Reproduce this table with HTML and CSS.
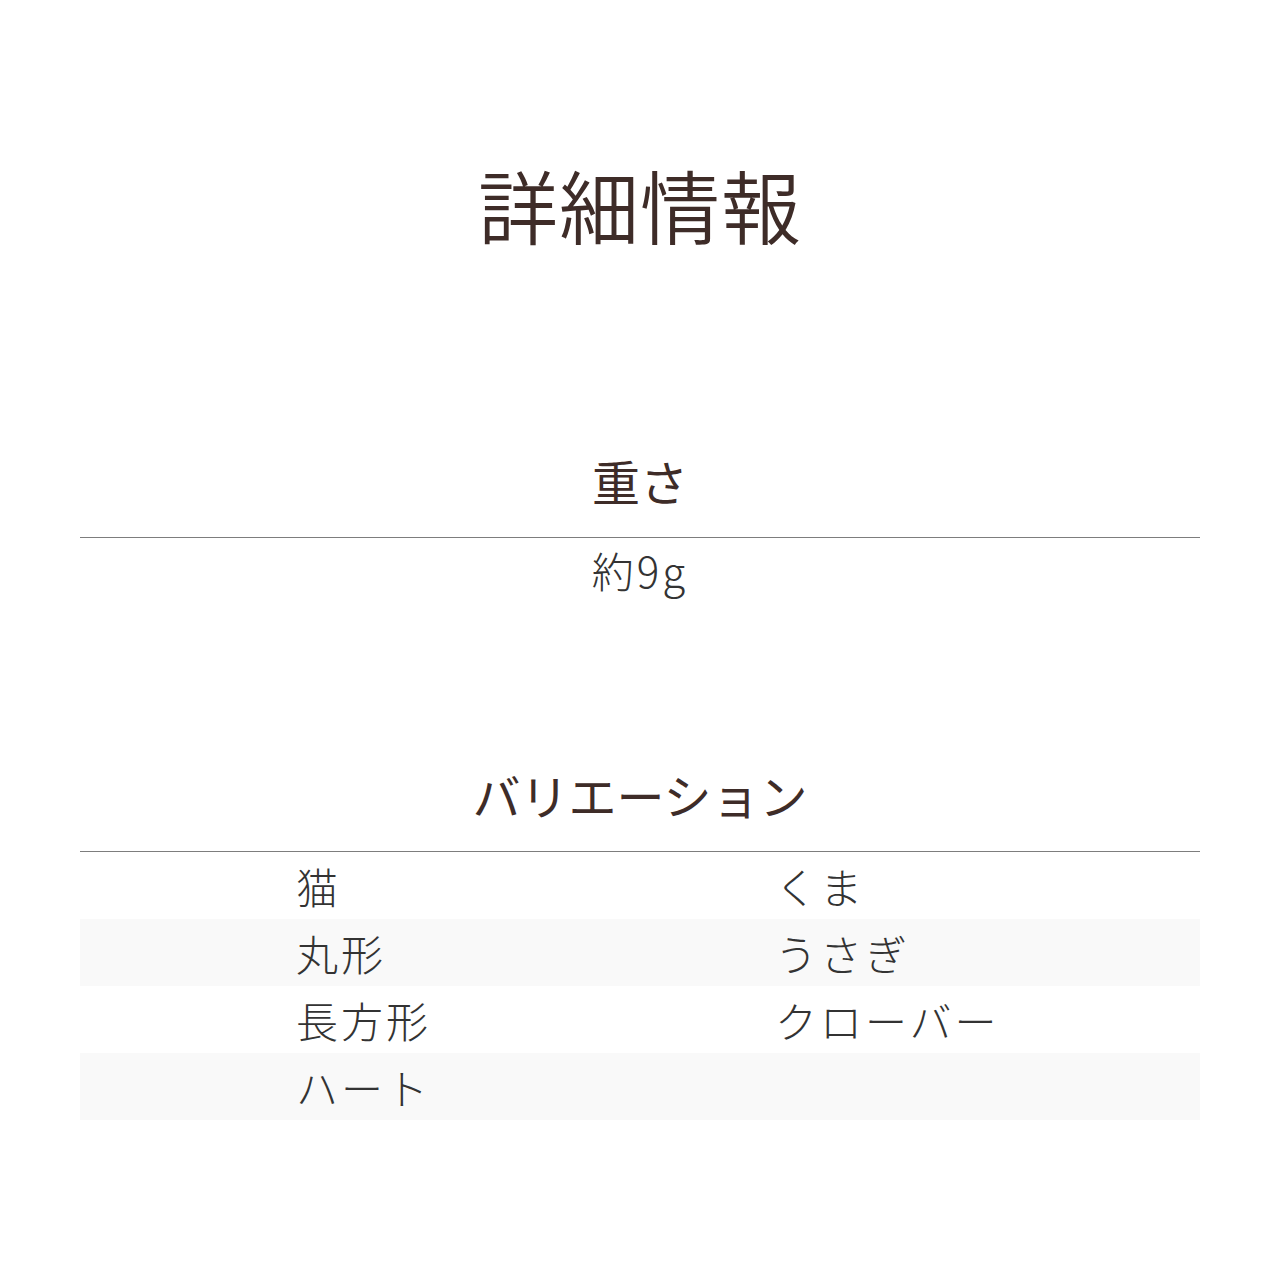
FILE: index.html
```html
<!DOCTYPE html>
<html lang="ja">
<head>
<meta charset="utf-8">
<title>詳細情報</title>
<link rel="stylesheet" href="styles.css">
</head>
<body>
<main class="page">
  <h1 class="title">詳細情報</h1>
  <section class="spec spec-weight">
    <h2 class="spec-head">重さ</h2>
    <p class="spec-value">約9g</p>
  </section>
  <section class="spec spec-variation">
    <h2 class="spec-head">バリエーション</h2>
    <div class="variations">
      <div class="var-row"><span class="var-cell">猫</span><span class="var-cell">くま</span></div>
      <div class="var-row alt"><span class="var-cell">丸形</span><span class="var-cell">うさぎ</span></div>
      <div class="var-row"><span class="var-cell">長方形</span><span class="var-cell">クローバー</span></div>
      <div class="var-row alt"><span class="var-cell">ハート</span><span class="var-cell"></span></div>
    </div>
  </section>
</main>
</body>
</html>
```
FILE: styles.css
```css
html, body {
  margin: 0;
  padding: 0;
  background: #ffffff;
}
body {
  font-family: "Noto Sans CJK JP", "Noto Sans", sans-serif;
  color: #333333;
}
.page {
  width: 1120px;
  margin: 0 auto;
  padding-top: 171px;
}
.title {
  margin: 0;
  font-family: "Liberation Serif", "Noto Sans CJK JP", serif;
  font-size: 80px;
  line-height: 80px;
  font-weight: 350;
  letter-spacing: 1px;
  text-align: center;
  color: #3e2c28;
}
.spec {
  display: flex;
  flex-direction: column;
}
.spec-weight {
  margin-top: 205px;
}
.spec-variation {
  margin-top: 179px;
}
.spec-head {
  margin: 0;
  padding-bottom: 33px;
  border-bottom: 1px solid #7d7d7d;
  font-size: 48px;
  line-height: 48px;
  font-weight: 400;
  letter-spacing: 0;
  text-align: center;
  color: #3e2c28;
}
.spec-value {
  margin: 11px 0 0;
  font-size: 42px;
  line-height: 42px;
  font-weight: 300;
  letter-spacing: 3px;
  text-align: center;
  color: #333333;
}
.variations {
  display: flex;
  flex-direction: column;
}
.var-row {
  display: grid;
  grid-template-columns: 479px 1fr;
  align-items: center;
  height: 67px;
  padding-left: 216px;
  font-size: 42px;
  line-height: 42px;
  font-weight: 300;
  letter-spacing: 3px;
  color: #333333;
}
.var-row.alt {
  background: #f9f9f9;
}
```
